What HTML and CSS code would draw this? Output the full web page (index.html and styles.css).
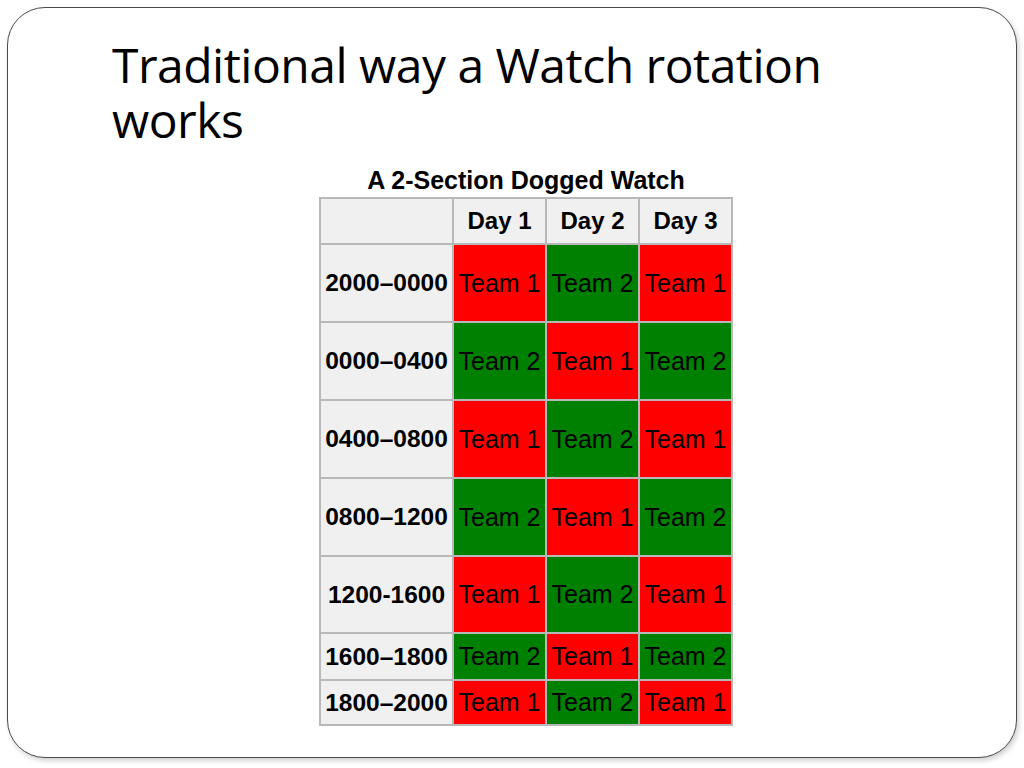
FILE: index.html
```html
<!DOCTYPE html>
<html lang="en">
<head>
<meta charset="utf-8">
<title>Traditional way a Watch rotation works</title>
<link rel="stylesheet" href="styles.css">
</head>
<body>
<div class="slide">
  <h1 class="title">Traditional way a Watch rotation works</h1>
  <div class="figure">
    <table class="watch">
      <caption>A 2-Section Dogged Watch</caption>
      <colgroup>
        <col class="c-label"><col class="c-day"><col class="c-day"><col class="c-day">
      </colgroup>
      <thead>
        <tr class="r-head"><th></th><th>Day 1</th><th>Day 2</th><th>Day 3</th></tr>
      </thead>
      <tbody>
        <tr class="r-tall"><th>2000–0000</th><td class="t1">Team 1</td><td class="t2">Team 2</td><td class="t1">Team 1</td></tr>
        <tr class="r-tall"><th>0000–0400</th><td class="t2">Team 2</td><td class="t1">Team 1</td><td class="t2">Team 2</td></tr>
        <tr class="r-tall"><th>0400–0800</th><td class="t1">Team 1</td><td class="t2">Team 2</td><td class="t1">Team 1</td></tr>
        <tr class="r-tall"><th>0800–1200</th><td class="t2">Team 2</td><td class="t1">Team 1</td><td class="t2">Team 2</td></tr>
        <tr class="r-tall2"><th>1200-1600</th><td class="t1">Team 1</td><td class="t2">Team 2</td><td class="t1">Team 1</td></tr>
        <tr class="r-short"><th>1600–1800</th><td class="t2">Team 2</td><td class="t1">Team 1</td><td class="t2">Team 2</td></tr>
        <tr class="r-short2"><th>1800–2000</th><td class="t1">Team 1</td><td class="t2">Team 2</td><td class="t1">Team 1</td></tr>
      </tbody>
    </table>
  </div>
</div>
</body>
</html>
```
FILE: styles.css
```css
html, body {
  margin: 0;
  padding: 0;
  background: #ffffff;
}
body {
  width: 1024px;
  height: 768px;
  overflow: hidden;
}
.slide {
  box-sizing: border-box;
  margin: 7px 0 0 7px;
  width: 1010px;
  height: 751px;
  border: 1px solid #4a4a4a;
  border-radius: 38px;
  box-shadow: 2px 3px 5px rgba(0, 0, 0, 0.18);
  background: #ffffff;
  padding: 29px 0 0 104px;
}
.title {
  margin: 0;
  width: 760px;
  font-family: "Open Sans", "Noto Sans", sans-serif;
  font-weight: 400;
  font-size: 48px;
  line-height: 55px;
  color: #000000;
  letter-spacing: -0.5px;
}
.figure {
  margin: 19px 0 0 207px;
}
.watch {
  border-collapse: collapse;
  border: 2px solid #b8b8b8;
  font-family: "Liberation Sans", Arial, sans-serif;
  font-size: 25px;
  color: #000000;
}
.watch caption {
  font-weight: 700;
  font-size: 25px;
  line-height: 28px;
  padding-bottom: 3px;
  text-align: center;
  white-space: nowrap;
}
.c-label { width: 133px; }
.c-day { width: 93px; }
.watch th, .watch td {
  border: 2px solid #b8b8b8;
  padding: 0;
  text-align: center;
  vertical-align: middle;
  white-space: nowrap;
}
.watch th {
  background: #f0f0f0;
  font-weight: 700;
  font-size: 24.5px;
}
.watch thead th { font-size: 24px; }
.watch td.t1 { background: #ff0000; }
.watch td.t2 { background: #008000; }
.r-head th { height: 44px; }
.r-tall th, .r-tall td { height: 76px; }
.r-tall2 th, .r-tall2 td { height: 75px; }
.r-short th, .r-short td { height: 45px; }
.r-short2 th, .r-short2 td { height: 43px; }
```
